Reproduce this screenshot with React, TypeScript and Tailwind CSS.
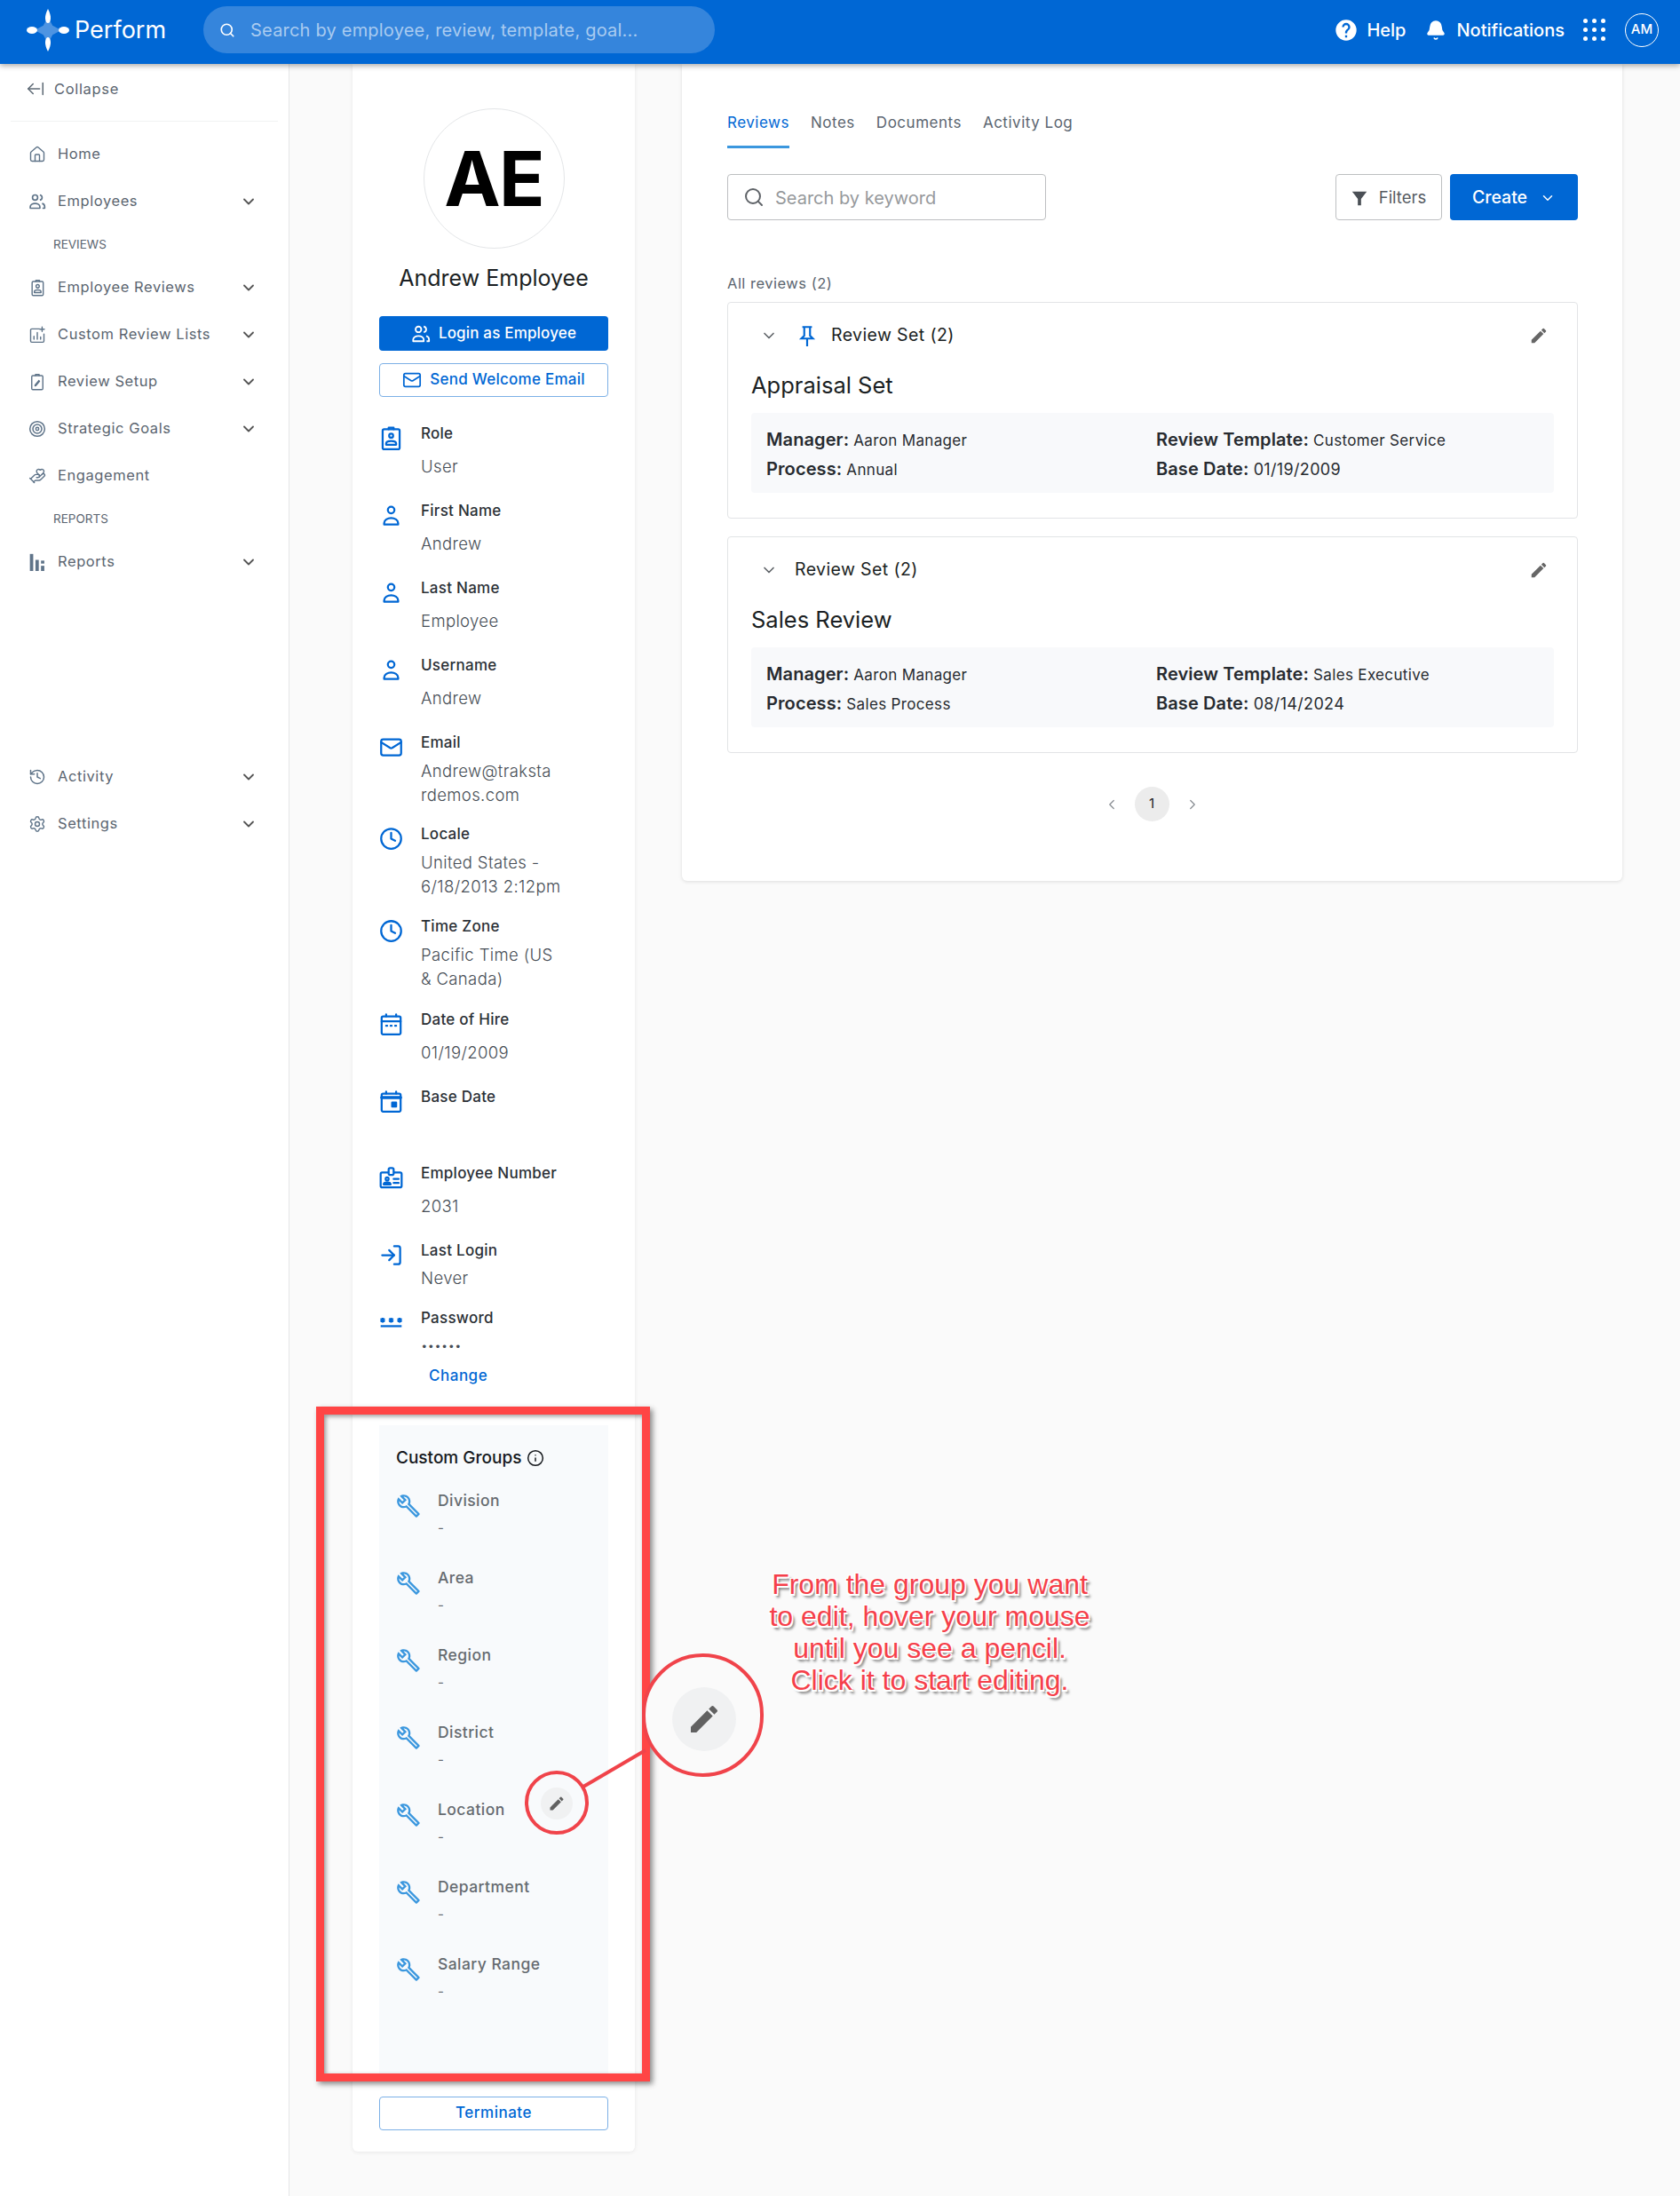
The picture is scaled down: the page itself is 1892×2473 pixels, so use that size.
import React from "react";
import {
  ArrowLeftFromLine, Home, ChevronDown, Target, HandHeart, History, Settings, Search, Clock, Mail, LogIn, Info, Bell, ChevronLeft, ChevronRight,
} from "lucide-react";

const EDIT = "M3 17.25V21h3.75L17.81 9.94l-3.75-3.75L3 17.25zM20.71 7.04a1 1 0 0 0 0-1.41l-2.34-2.34a1 1 0 0 0-1.41 0l-1.83 1.83 3.75 3.75 1.83-1.83z";
const WRENCH = "M22.61 18.99l-9.08-9.08c.93-2.34.45-5.1-1.44-7C9.79.61 6.21.4 3.66 2.26L7.5 6.11 6.08 7.52 2.25 3.69C.39 6.23.6 9.82 2.9 12.11c1.86 1.86 4.57 2.35 6.89 1.48l9.11 9.11c.39.39 1.02.39 1.41 0l2.3-2.3c.4-.38.4-1.02 0-1.41zm-3 1.6l-9.46-9.46c-.61.45-1.29.72-2 .82-1.36.2-2.79-.21-3.83-1.25C3.37 9.76 2.93 8.5 3 7.26l3.09 3.09 4.24-4.24-3.09-3.09c1.24-.07 2.49.37 3.44 1.31 1.08 1.08 1.49 2.57 1.24 3.96-.12.71-.42 1.37-.88 1.96l9.45 9.45-.88.88z";

function Pencil({ className }: { className: string }) {
  return <svg viewBox="0 0 24 24" className={className} fill="currentColor"><path d={EDIT} /></svg>;
}

function Logo() {
  return (
    <svg width="48" height="48" viewBox="0 0 48 48">
      <path d="M24 9l8 15-8 15-8-15z M9 24l15-8 15 8-15 8z" fill="#4d94e2" />
      <path d="M24 0c2.200 4 3.200 8 3 11-.2 3-1.400 5-3 5s-2.800-2-3-5c-.2-3 .8-7 3-11z" fill="#fff" />
      <path d="M24 48c2.200-4 3.200-8 3-11-.2-3-1.400-5-3-5s-2.800 2-3 5c-.2 3 .8 7 3 11z" fill="#fff" />
      <ellipse cx="6" cy="24" rx="6" ry="4" fill="#fff" />
      <ellipse cx="42" cy="24" rx="6" ry="4" fill="#fff" />
    </svg>
  );
}

/* sidebar icons */
const navIcon = "w-5 h-5 text-[#5f7489]";
const s = { fill: "none", stroke: "currentColor", strokeWidth: 1.7, strokeLinecap: "round" as const, strokeLinejoin: "round" as const };
function ClipPerson() {
  return <svg viewBox="0 0 24 24" className={navIcon} {...s}><rect x="5" y="3.500" width="15" height="19" rx="1.500" /><path d="M10 3.500V2h5v1.500" /><circle cx="12.500" cy="10" r="2.200" /><path d="M8 18.500v-1c0-1.500 2-2.500 4.500-2.500s4.500 1 4.500 2.500v1z" /></svg>;
}
function ChartPlus() {
  return <svg viewBox="0 0 24 24" className={navIcon} {...s}><path d="M15 4H4.500A1.500 1.500 0 0 0 3 5.500v15A1.500 1.500 0 0 0 4.500 22h15a1.500 1.500 0 0 0 1.500-1.500V11" /><path d="M7.500 18v-4M12 18V9M16.500 18v-3M18.500 1.500v6M15.500 4.500h6" /></svg>;
}
function ClipEdit() {
  return <svg viewBox="0 0 24 24" className={navIcon} {...s}><rect x="4.500" y="3.500" width="15" height="19" rx="1.500" /><path d="M9.500 3.500V2h5v1.500M9 17.500l1-.2 5-6-1-1-5 6z" /></svg>;
}
function BarsIcon() {
  return <svg viewBox="0 0 24 24" className={navIcon} fill="currentColor"><rect x="2" y="1" width="4.500" height="23" /><rect x="9.500" y="9" width="4.500" height="15" /><rect x="17" y="10" width="4.500" height="4" /><rect x="17" y="17" width="4.500" height="7" /></svg>;
}
function TwoPeople({ className }: { className: string }) {
  return <svg viewBox="0 0 24 24" className={className} fill="none" stroke="currentColor" strokeWidth="2" strokeLinejoin="round"><circle cx="9" cy="6.500" r="3.500" /><path d="M2.500 21v-2c0-2.500 3-4.500 6.500-4.500s6.500 2 6.500 4.500v2z" /><path d="M15.500 3c2 .5 3 2 3 3.500s-1 3-3 3.500M18.500 14.500c2 .5 3.500 2.300 3.500 4.500v2h-3" /></svg>;
}

function NavRow({ icon, label, chevron = true }: { icon: React.ReactNode; label: string; chevron?: boolean }) {
  return (
    <div className="h-[53px] flex items-center pl-[32px] pr-[35px]">
      <span className="w-5 h-5 flex items-center justify-center mr-[13px]">{icon}</span>
      <span className="flex-1 text-[16.500px] text-[#5b6570] tracking-[0.035em]">{label}</span>
      {chevron && <ChevronDown className="w-5 h-5 text-[#555]" strokeWidth={2.2} />}
    </div>
  );
}
function NavSection({ label }: { label: string }) {
  return <div className="h-[44px] flex items-center pl-[60px] text-[13.500px] text-[#5b6570]">{label}</div>;
}

function Sidebar() {
  return (
    <aside className="w-[326px] shrink-0 bg-white border-r border-[#e4e6e8]">
      <div className="h-[65px] mx-[12px] pb-[16px] pl-[17px] flex items-end border-b border-[#f1f2f3]">
        <div className="flex items-center h-[38px] mb-[1px]">
          <ArrowLeftFromLine className="w-[22px] h-[22px] text-[#5f6b76] mr-[10px]" strokeWidth={1.7} />
          <span className="text-[16.500px] text-[#5b6570] tracking-[0.04em]">Collapse</span>
        </div>
      </div>
      <div className="mt-[10px]">
        <NavRow icon={<Home className={navIcon} strokeWidth={1.7} />} label="Home" chevron={false} />
        <NavRow icon={<TwoPeople className={navIcon} />} label="Employees" />
        <NavSection label="REVIEWS" />
        <NavRow icon={<ClipPerson />} label="Employee Reviews" />
        <NavRow icon={<ChartPlus />} label="Custom Review Lists" />
        <NavRow icon={<ClipEdit />} label="Review Setup" />
        <NavRow icon={<Target className={navIcon} strokeWidth={1.8} />} label="Strategic Goals" />
        <NavRow icon={<HandHeart className={navIcon} strokeWidth={1.7} />} label="Engagement" chevron={false} />
        <NavSection label="REPORTS" />
        <NavRow icon={<BarsIcon />} label="Reports" />
        <div className="mt-[189px]">
          <NavRow icon={<History className={navIcon} strokeWidth={1.8} />} label="Activity" />
          <NavRow icon={<Settings className={navIcon} strokeWidth={1.7} />} label="Settings" />
        </div>
      </div>
    </aside>
  );
}

/* field icons */
const fi = "w-[27px] h-[27px] text-[#0067d4]";
const b = { fill: "none", stroke: "currentColor", strokeWidth: 2, strokeLinecap: "round" as const, strokeLinejoin: "round" as const };
const IRole = () => <svg viewBox="0 0 24 24" className={fi} {...b}><rect x="3.500" y="3" width="17" height="20" rx="1.500" /><path d="M9.500 3V1.500h5V3" /><circle cx="12" cy="9.500" r="2" /><path d="M7 18.500v-1.200c0-1.500 2.300-2.500 5-2.500s5 1 5 2.500v1.200z" /></svg>;
const IPerson = () => <svg viewBox="0 0 24 24" className={fi} {...b}><circle cx="12" cy="6.500" r="3.300" /><path d="M5 21v-1.500c0-3 3.500-5 7-5s7 2 7 5V21z" /></svg>;
const ICalA = () => <svg viewBox="0 0 24 24" className={fi} {...b}><rect x="2.500" y="4" width="19" height="18" rx="1.500" /><path d="M2.500 9h19M7 2v2M17 2v2" /><path d="M7 13.500h1M11.500 13.500h1M16 13.500h1" /></svg>;
const ICalB = () => <svg viewBox="0 0 24 24" className={fi} {...b}><rect x="2.500" y="4" width="19" height="18" rx="1.500" /><path d="M2.500 8h19" strokeWidth="3" /><path d="M7 2v2M17 2v2" /><rect x="13" y="13" width="4" height="4" fill="currentColor" /></svg>;
const IBadge = () => <svg viewBox="0 0 24 24" className={fi} {...b}><rect x="1.500" y="6.500" width="21" height="15" rx="1.500" /><rect x="9.500" y="2" width="5" height="7" rx="1.500" fill="#fff" /><circle cx="8" cy="13" r="1.500" /><path d="M4.500 18.500c0-1.500 1.500-2 3.500-2s3.500.5 3.500 2zM14.500 13h5M14.500 17h5" /></svg>;
const IPass = () => <svg viewBox="0 0 24 24" className={fi} fill="none" stroke="currentColor" strokeWidth="1.800"><path d="M3.500 7v5M1.300 8.200l4.400 2.600M5.700 8.200l-4.400 2.600M12 7v5M9.800 8.200l4.400 2.600M14.200 8.200l-4.400 2.600M20.500 7v5M18.300 8.200l4.400 2.600M22.700 8.200l-4.400 2.600" /><path d="M1.500 15.500h21" strokeWidth="2" /></svg>;

function Field({ icon, label, children, rowClass, valueClass }: { icon: React.ReactNode; label: string; children?: React.ReactNode; rowClass: string; valueClass: string }) {
  return (
    <div className={`flex ${rowClass}`}>
      <div className="w-[47px] shrink-0 pt-[4px]">{icon}</div>
      <div className="min-w-0">
        <div className="h-[24px] leading-[24px] text-[17px] tracking-[0.015em] font-medium text-[#2b3036] whitespace-nowrap">{label}</div>
        {children != null && <div className={`leading-[27px] font-light text-[#474e56] whitespace-nowrap ${valueClass}`}>{children}</div>}
      </div>
    </div>
  );
}

function GroupRow({ label, children }: { label: string; children?: React.ReactNode }) {
  return (
    <div className="h-[87px] flex relative">
      <svg viewBox="0 0 24 24" className="w-[28px] h-[28px] mt-[5px] mr-[19px] text-[#3b97de]" fill="currentColor"><path d={WRENCH} /></svg>
      <div>
        <div className="h-[24px] mt-[1px] leading-[24px] text-[17.500px] tracking-[0.025em] font-medium text-[#666b70]">{label}</div>
        <div className="mt-[7px] h-[24px] leading-[24px] text-[15px] text-[#666b70]">-</div>
      </div>
      {children}
    </div>
  );
}

const val = "text-[18.500px] tracking-[0.02em]";

function ProfileCard() {
  return (
    <section className="w-[318px] shrink-0 bg-white rounded-b-md shadow-[0_1px_4px_rgba(0,0,0,0.08)] px-[30px] pb-[24px] h-[2351px]">
      <div className="pt-[50px] flex justify-center">
        <div className="w-[159px] h-[158px] rounded-full border border-[#e4e6e8] flex items-center justify-center text-[85px] font-bold text-black leading-none tracking-[-0.02em]">AE</div>
      </div>
      <div className="mt-[16px] h-[34px] leading-[34px] text-center text-[25px] text-[#1b1f23]">Andrew Employee</div>
      <button className="mt-[26px] w-full h-[39px] rounded bg-[#0067d4] text-white text-[17px] tracking-[0.01em] font-medium flex items-center justify-center gap-[9px]">
        <TwoPeople className="w-[22px] h-[22px]" />Login as Employee
      </button>
      <button className="mt-[14px] w-full h-[38px] rounded border border-[#7cb0e6] text-[#0067d4] text-[17px] tracking-[0.015em] font-medium flex items-center justify-center gap-[9px] whitespace-nowrap">
        <Mail className="w-[22px] h-[22px]" strokeWidth={1.9} />Send Welcome Email
      </button>
      <div className="mt-[29px]">
        <Field icon={<IRole />} label="Role" rowClass="h-[87px]" valueClass={`mt-[12px] ${val}`}>User</Field>
        <Field icon={<IPerson />} label="First Name" rowClass="h-[87px]" valueClass={`mt-[12px] ${val}`}>Andrew</Field>
        <Field icon={<IPerson />} label="Last Name" rowClass="h-[87px]" valueClass={`mt-[12px] ${val}`}>Employee</Field>
        <Field icon={<IPerson />} label="Username" rowClass="h-[87px]" valueClass={`mt-[12px] ${val}`}>Andrew</Field>
        <Field icon={<Mail className={fi} strokeWidth={2} />} label="Email" rowClass="h-[103px]" valueClass={`mt-[7px] ${val}`}>Andrew@traksta<br />rdemos.com</Field>
        <Field icon={<Clock className={fi} strokeWidth={2} />} label="Locale" rowClass="h-[104px]" valueClass={`mt-[7px] ${val}`}>United States -<br />6/18/2013 2:12pm</Field>
        <Field icon={<Clock className={fi} strokeWidth={2} />} label="Time Zone" rowClass="h-[105px]" valueClass={`mt-[7px] ${val}`}>Pacific Time (US<br />&amp; Canada)</Field>
        <Field icon={<ICalA />} label="Date of Hire" rowClass="h-[87px]" valueClass={`mt-[12px] ${val}`}>01/19/2009</Field>
        <Field icon={<ICalB />} label="Base Date" rowClass="h-[86px]" valueClass="" />
        <Field icon={<IBadge />} label="Employee Number" rowClass="h-[87px]" valueClass={`mt-[12px] ${val}`}>2031</Field>
        <Field icon={<LogIn className={fi} strokeWidth={2} />} label="Last Login" rowClass="h-[76px]" valueClass={`mt-[6px] ${val}`}>Never</Field>
        <div className="h-[133px]">
          <Field icon={<IPass />} label="Password" rowClass="h-[62px]" valueClass="mt-[6px] font-bold text-[13.500px]">••••••</Field>
          <div className="ml-[56px] mt-[3px] h-[24px] leading-[24px] text-[17px] tracking-[0.03em] font-medium text-[#0067d4]">Change</div>
        </div>
      </div>
      <div className="bg-[#f8fafc] px-[19px] pt-[25px] pb-[56px]">
        <div className="h-[24px] flex items-center text-[19px] font-medium text-[#16191d] gap-[6px]">
          Custom Groups <Info className="w-[20px] h-[20px]" strokeWidth={1.8} />
        </div>
        <div className="mt-[23px]">
          <GroupRow label="Division" />
          <GroupRow label="Area" />
          <GroupRow label="Region" />
          <GroupRow label="District" />
          <GroupRow label="Location">
            <span className="absolute left-[163px] top-[-12px] w-[36px] h-[36px] rounded-full bg-[#f0f1f2] flex items-center justify-center">
              <Pencil className="w-[20px] h-[20px] text-[#616161]" />
            </span>
          </GroupRow>
          <GroupRow label="Department" />
          <GroupRow label="Salary Range" />
        </div>
      </div>
      <button className="mt-[19px] w-full h-[38px] rounded border border-[#7cb0e6] text-[#0067d4] text-[17px] tracking-[0.03em] font-medium">Terminate</button>
    </section>
  );
}

function ReviewCard({ pin, title, process, template, date }: { pin: boolean; title: string; process: string; template: string; date: string }) {
  const strong = "text-[20px] tracking-[0.005em] font-semibold";
  return (
    <div className="border border-[#e2e4e6] rounded px-[26px] h-[244px]">
      <div className="mt-[17px] h-[40px] flex items-center relative pl-[10px]">
        <ChevronDown className="w-[20px] h-[20px] text-[#5f6368] mr-[19px]" strokeWidth={2} />
        {pin && (
          <svg viewBox="0 0 24 24" className="w-[26px] h-[26px] text-[#0067d4] mr-[14px] ml-[1px]" fill="none" stroke="currentColor" strokeWidth="2"><path d="M7 3h10M9 3v9l-3 3h12l-3-3V3M12 15v8" /></svg>
        )}
        <span className="text-[19.500px] text-[#1b1f23] tracking-[0.02em]">Review Set (2)</span>
        <Pencil className="absolute right-[6px] w-[22px] h-[22px] text-[#666]" />
      </div>
      <div className="mt-[20px] h-[32px] leading-[32px] text-[25.500px] text-[#1b1f23]">{title}</div>
      <div className="mt-[15px] h-[90px] bg-[#f8f9fb] rounded px-[17px] pt-[18px] grid grid-cols-[439px_1fr] gap-y-[9px] auto-rows-[24px] leading-[24px] text-[17px] tracking-[0.02em] text-[#272b30] whitespace-nowrap">
        <div><b className={strong}>Manager:</b> Aaron Manager</div>
        <div><b className={strong}>Review Template:</b> {template}</div>
        <div><b className={strong}>Process:</b> {process}</div>
        <div><b className={strong}>Base Date:</b> <span className="text-[18px]">{date}</span></div>
      </div>
    </div>
  );
}

function MainCard() {
  return (
    <section className="w-[1059px] shrink-0 h-[920px] bg-white rounded-b-md shadow-[0_1px_4px_rgba(0,0,0,0.12)] pl-[51px] pr-[50px] pt-[52px]">
      <div className="flex gap-[24px] text-[17px] tracking-[0.03em] text-[#5b6570]">
        <span className="h-[43px] leading-[28px] border-b-[3px] border-[#3b97de] text-[#0067d4]">Reviews</span>
        <span className="leading-[28px]">Notes</span>
        <span className="leading-[28px]">Documents</span>
        <span className="leading-[28px]">Activity Log</span>
      </div>
      <div className="mt-[29px] h-[52px] flex">
        <div className="w-[359px] border border-[#bdbfc1] rounded flex items-center pl-[17px]">
          <Search className="w-[24px] h-[24px] text-[#5f6368] mr-[12px]" strokeWidth={2} />
          <span className="text-[20px] text-[#96999c] pt-[1px]">Search by keyword</span>
        </div>
        <div className="ml-auto w-[120px] border border-[#bdbfc1] rounded flex items-center justify-center text-[18.500px] text-[#555b62] pr-[2px] pt-[1px]">
          <svg viewBox="0 0 24 24" className="w-[22px] h-[22px] mr-[11px] text-[#4a4f55]" fill="currentColor"><path d="M3 4h18l-7 9v8h-4v-8z" /></svg>
          Filters
        </div>
        <div className="ml-[9px] w-[144px] bg-[#0067d4] rounded text-white font-medium text-[19.500px] flex items-center justify-center pt-[1px]">
          Create
          <ChevronDown className="w-[18px] h-[18px] ml-[14px]" strokeWidth={2} />
        </div>
      </div>
      <div className="mt-[59px] h-[24px] leading-[24px] text-[16.500px] text-[#5b6570] tracking-[0.03em]">All reviews (2)</div>
      <div className="mt-[9px]">
        <ReviewCard pin title="Appraisal Set" process="Annual" template="Customer Service" date="01/19/2009" />
      </div>
      <div className="mt-[20px]">
        <ReviewCard pin={false} title="Sales Review" process="Sales Process" template="Sales Executive" date="08/14/2024" />
      </div>
      <div className="mt-[38px] flex items-center justify-center gap-[17px] -translate-x-[1px]">
        <ChevronLeft className="w-[18px] h-[18px] text-[#8a8f94]" strokeWidth={1.7} />
        <span className="w-[39px] h-[39px] rounded-full bg-[#ececec] flex items-center justify-center text-[15px] text-[#222]">1</span>
        <ChevronRight className="w-[18px] h-[18px] text-[#8a8f94]" strokeWidth={1.7} />
      </div>
    </section>
  );
}

function Header() {
  return (
    <header className="h-[72px] bg-[#0067d4] shadow-[0_2px_6px_rgba(0,0,0,0.35)] relative z-10 flex items-center pl-[30px] pr-[24px] pb-[5px] text-white">
      <Logo />
      <span className="ml-[6px] text-[27px] leading-none">Perform</span>
      <div className="ml-[42px] w-[576px] h-[53px] rounded-full bg-[#3585dc] flex items-center pl-[18px]">
        <Search className="w-[18px] h-[18px] mr-[17px]" strokeWidth={2.2} />
        <span className="text-[20px] tracking-[0.01em] text-[#a9cbf0]">Search by employee, review, template, goal...</span>
      </div>
      <div className="ml-auto flex items-center">
        <svg viewBox="0 0 24 24" className="w-[28px] h-[28px] mr-[9px]" fill="currentColor"><path d="M12 2a10 10 0 1 0 0 20 10 10 0 0 0 0-20zm1 17h-2v-2h2zm2.070-7.750-.900.920C13.450 12.900 13 13.500 13 15h-2v-.500c0-1.100.450-2.100 1.170-2.830l1.240-1.260A2 2 0 0 0 14 9a2 2 0 0 0-4 0H8a4 4 0 0 1 8 0c0 .880-.360 1.680-.930 2.250z" /></svg>
        <span className="text-[20px] font-medium">Help</span>
        <Bell className="w-[24px] h-[24px] ml-[22px] mr-[11px]" fill="currentColor" strokeWidth={1.500} />
        <span className="text-[20px] font-medium">Notifications</span>
        <div className="ml-[21px] grid grid-cols-3 gap-[5px]">
          {Array.from({ length: 9 }).map((_, i) => <span key={i} className="w-[5px] h-[5px] rounded-full bg-white" />)}
        </div>
        <div className="ml-[22px] w-[38px] h-[38px] rounded-full border border-white flex items-center justify-center text-[15px] font-medium">AM</div>
      </div>
    </header>
  );
}

function Annotation() {
  return (
    <>
      <div className="absolute left-[356px] top-[1584px] w-[376px] h-[760px] border-[9px] border-[#ff4545] shadow-[3px_3px_6px_rgba(0,0,0,0.45),inset_2px_2px_5px_rgba(0,0,0,0.4)]" />
      <div className="absolute left-[591px] top-[1994px] w-[72px] h-[72px] rounded-full border-[4px] border-[#f0434a]" />
      <svg className="absolute left-[650px] top-[1965px]" width="85" height="55"><line x1="7" y1="47" x2="77" y2="6" stroke="#f0434a" strokeWidth="4" /></svg>
      <div className="absolute left-[723px] top-[1862px] w-[137px] h-[139px] rounded-full border-[4px] border-[#f0434a] bg-[#fafafa] flex items-center justify-center">
        <span className="w-[72px] h-[72px] rounded-full bg-[#f0f1f2] flex items-center justify-center ml-[2px] mt-[8px]">
          <Pencil className="w-[40px] h-[40px] text-[#616161]" />
        </span>
      </div>
      <div className="absolute left-[847px] top-[1766px] w-[400px] text-center font-['Liberation_Sans',Arial,sans-serif] text-[32px] leading-[36px] text-[#f5404a] [text-shadow:1.5px_1.5px_0_#fff,-1.5px_-1.5px_0_#fff,1.5px_-1.5px_0_#fff,-1.5px_1.5px_0_#fff,3px_4px_3px_rgba(0,0,0,0.55)]">
        From the group you want<br />to edit, hover your mouse<br />until you see a pencil.<br />Click it to start editing.
      </div>
    </>
  );
}

export default function App() {
  return (
    <div className="relative h-[2473px] bg-[#fafafa] font-['Inter',sans-serif] overflow-hidden">
      <Header />
      <div className="flex h-[2401px]">
        <Sidebar />
        <main className="flex pl-[71px] gap-[53px] items-start">
          <ProfileCard />
          <MainCard />
        </main>
      </div>
      <Annotation />
    </div>
  );
}
